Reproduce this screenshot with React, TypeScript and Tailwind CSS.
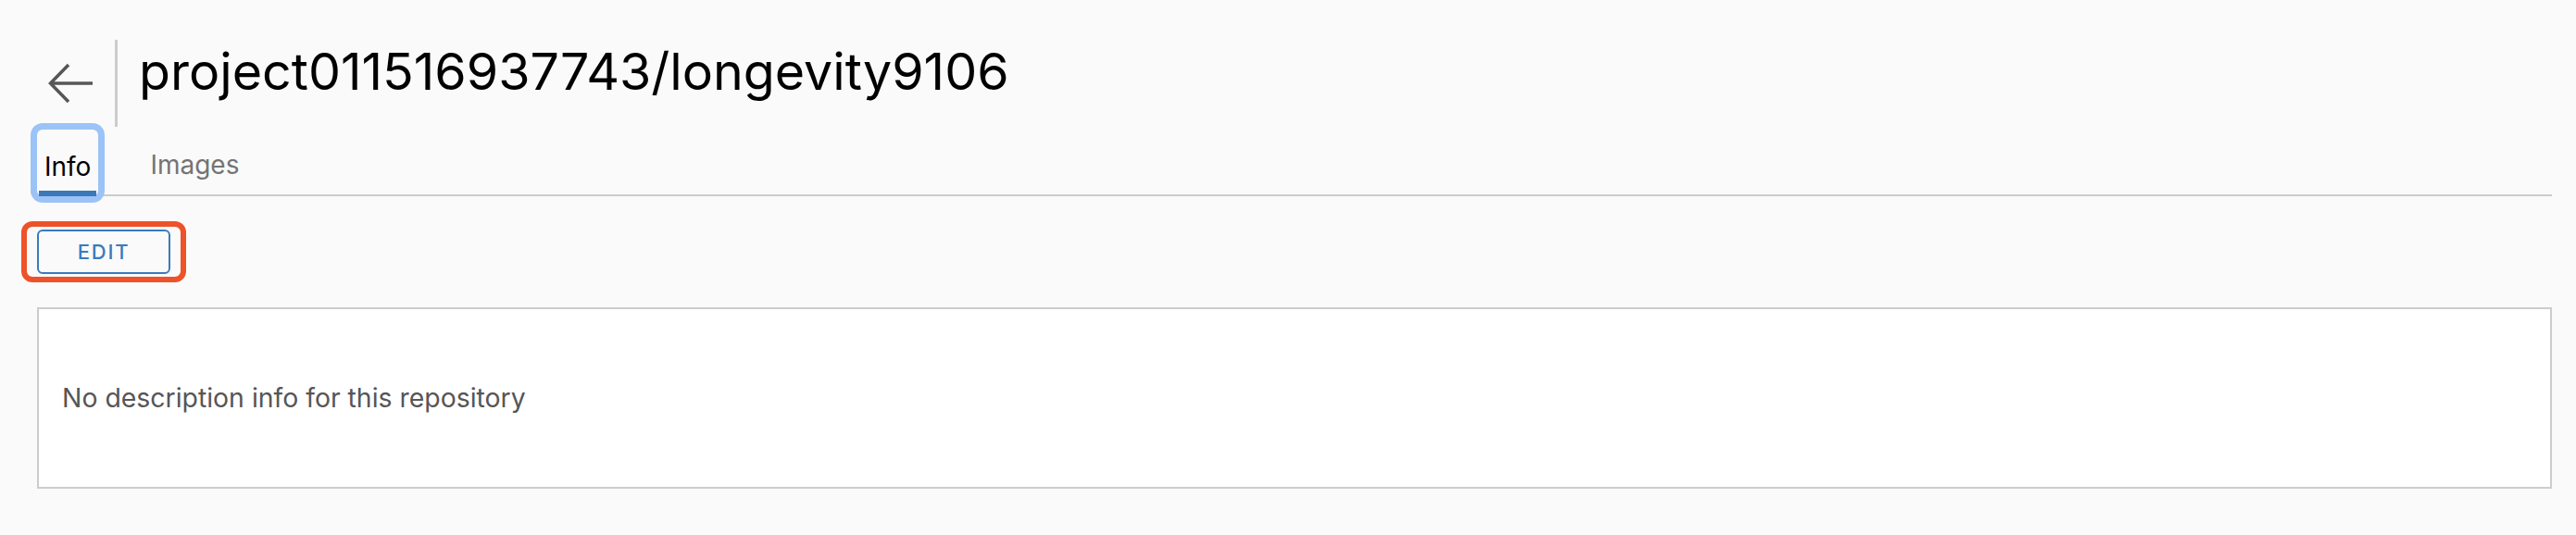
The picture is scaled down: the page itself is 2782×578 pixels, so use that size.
export default function App() {
  return (
    <div
      className="min-h-[578px] w-full bg-[#fafafa]"
      style={{ fontFamily: 'Inter, "Noto Sans", sans-serif' }}
    >
      {/* header */}
      <div className="flex items-start pl-[52px] pt-[43px]">
        <button aria-label="Back" className="mt-[25px] text-[#565656]">
          <svg width="48" height="44" viewBox="0 0 48 44" fill="none" stroke="currentColor" strokeWidth={3.5}>
            <path d="M48 22H2.5" />
            <path d="M22 2L2.5 22L22 42" />
          </svg>
        </button>
        <div className="ml-[24px] h-[94px] w-[3px] bg-[#cccccc]" />
        <h1 className="ml-[23px] mt-[6px] text-[55.5px] leading-[56px] font-normal text-black">
          project011516937743/longevity9106
        </h1>
      </div>

      {/* tabs */}
      <div className="ml-[40px] mr-[26px] mt-[3px] flex items-end border-b-2 border-[#cccccc]">
        <button className="-mb-[2px] flex h-[72px] flex-col justify-end rounded-[6px] px-[8px] text-[28px] leading-[28px] text-black ring-[7px] ring-[#9cc3f7]">
          <span className="mb-[12px]">Info</span>
          <span className="-mx-[6px] h-[6px] bg-[#3a78b8]" />
        </button>
        <button className="ml-[48px] flex h-[70px] flex-col justify-end px-[8px] text-[28px] leading-[28px] text-[#747474]">
          <span className="mb-[18px]">Images</span>
        </button>
      </div>

      {/* edit */}
      <div className="ml-[23px] mt-[27px] inline-flex rounded-[12px] border-[6px] border-[#ee5229] px-[11px] py-[3px]">
        <button className="flex h-[48px] w-[144px] items-center justify-center rounded-[6px] border-2 border-[#3b7abb] text-[22px] font-medium tracking-[0.08em] text-[#3b7abb]">
          EDIT
        </button>
      </div>

      {/* description */}
      <div className="ml-[40px] mr-[26px] mt-[27px] flex h-[196px] items-center border-2 border-[#cccccc] bg-white pl-[25px]">
        <p className="text-[28.4px] leading-[28px] text-[#565656]">No description info for this repository</p>
      </div>
    </div>
  )
}
